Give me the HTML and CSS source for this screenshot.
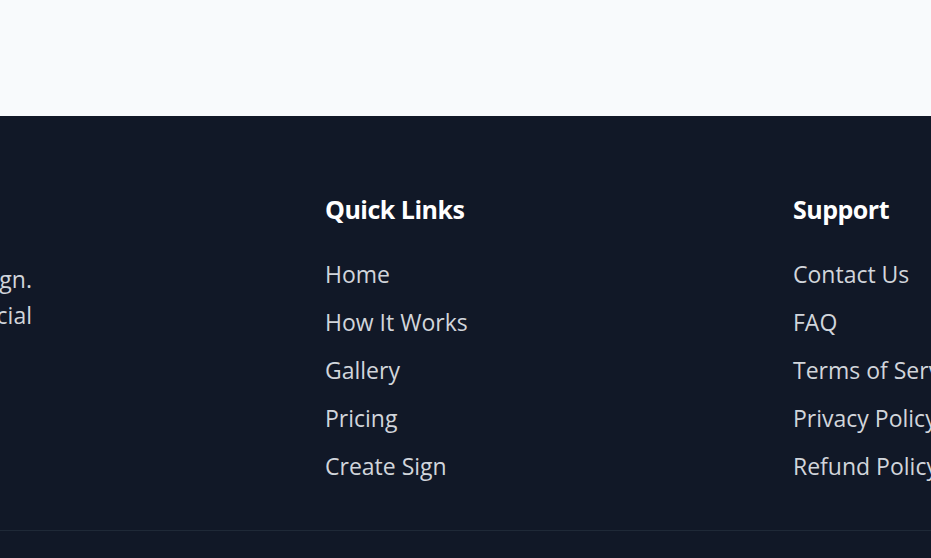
FILE: index.html
```html
<!DOCTYPE html>
<html lang="en">
<head>
<meta charset="utf-8">
<title>Footer</title>
<link rel="stylesheet" href="styles.css">
</head>
<body>
  <section class="hero"></section>
  <footer class="footer">
    <div class="footer-grid">
      <div class="col brand">
        <p class="brand-text">
          <span class="line">Turn your words into a glowing custom neon design.</span>
          <span class="line">Perfect for homes, events and commercial</span>
        </p>
      </div>
      <div class="col">
        <h3 class="col-title">Quick Links</h3>
        <ul class="links">
          <li><a href="#">Home</a></li>
          <li><a href="#">How It Works</a></li>
          <li><a href="#">Gallery</a></li>
          <li><a href="#">Pricing</a></li>
          <li><a href="#">Create Sign</a></li>
        </ul>
      </div>
      <div class="col">
        <h3 class="col-title">Support</h3>
        <ul class="links">
          <li><a href="#">Contact Us</a></li>
          <li><a href="#">FAQ</a></li>
          <li><a href="#">Terms of Service</a></li>
          <li><a href="#">Privacy Policy</a></li>
          <li><a href="#">Refund Policy</a></li>
        </ul>
      </div>
      <div class="col">
        <h3 class="col-title">Follow Us</h3>
      </div>
    </div>
    <div class="footer-bottom">
      <p class="copy">&copy; 2024 All rights reserved.</p>
    </div>
  </footer>
</body>
</html>
```

FILE: styles.css
```css
* { box-sizing: border-box; }
html, body { margin: 0; padding: 0; }
body {
  background: #f8fafc;
  font-family: "Open Sans", "Noto Sans", "Liberation Sans", sans-serif;
  overflow: hidden;
}
.hero { height: 116px; background: #f8fafc; }
.footer {
  background: #111827;
  color: #d1d5db;
  padding-top: 77px;
}
.footer-grid {
  display: grid;
  grid-template-columns: repeat(4, 420px);
  column-gap: 48px;
  margin-left: -143px;
  padding-bottom: 48px;
}
.col-title {
  margin: 0 0 33px;
  color: #ffffff;
  font-size: 25px;
  font-weight: 700;
  line-height: 32px;
  letter-spacing: -0.5px;
}
.links {
  list-style: none;
  margin: 0;
  padding: 0;
  display: flex;
  flex-direction: column;
  gap: 16px;
}
.links a {
  display: block;
  color: #d1d5db;
  text-decoration: none;
  font-size: 23px;
  line-height: 32px;
  white-space: nowrap;
}
.brand { padding-top: 68px; }
.brand-text {
  margin: 0;
  width: 175px;
  display: flex;
  flex-direction: column;
  align-items: flex-end;
  font-size: 23px;
  line-height: 36px;
  color: #d1d5db;
}
.line { display: block; white-space: nowrap; }
.footer-bottom {
  border-top: 1px solid #1f2937;
  padding: 32px 0;
}
.copy { margin: 0; text-align: center; color: #9ca3af; font-size: 16px; }
```
